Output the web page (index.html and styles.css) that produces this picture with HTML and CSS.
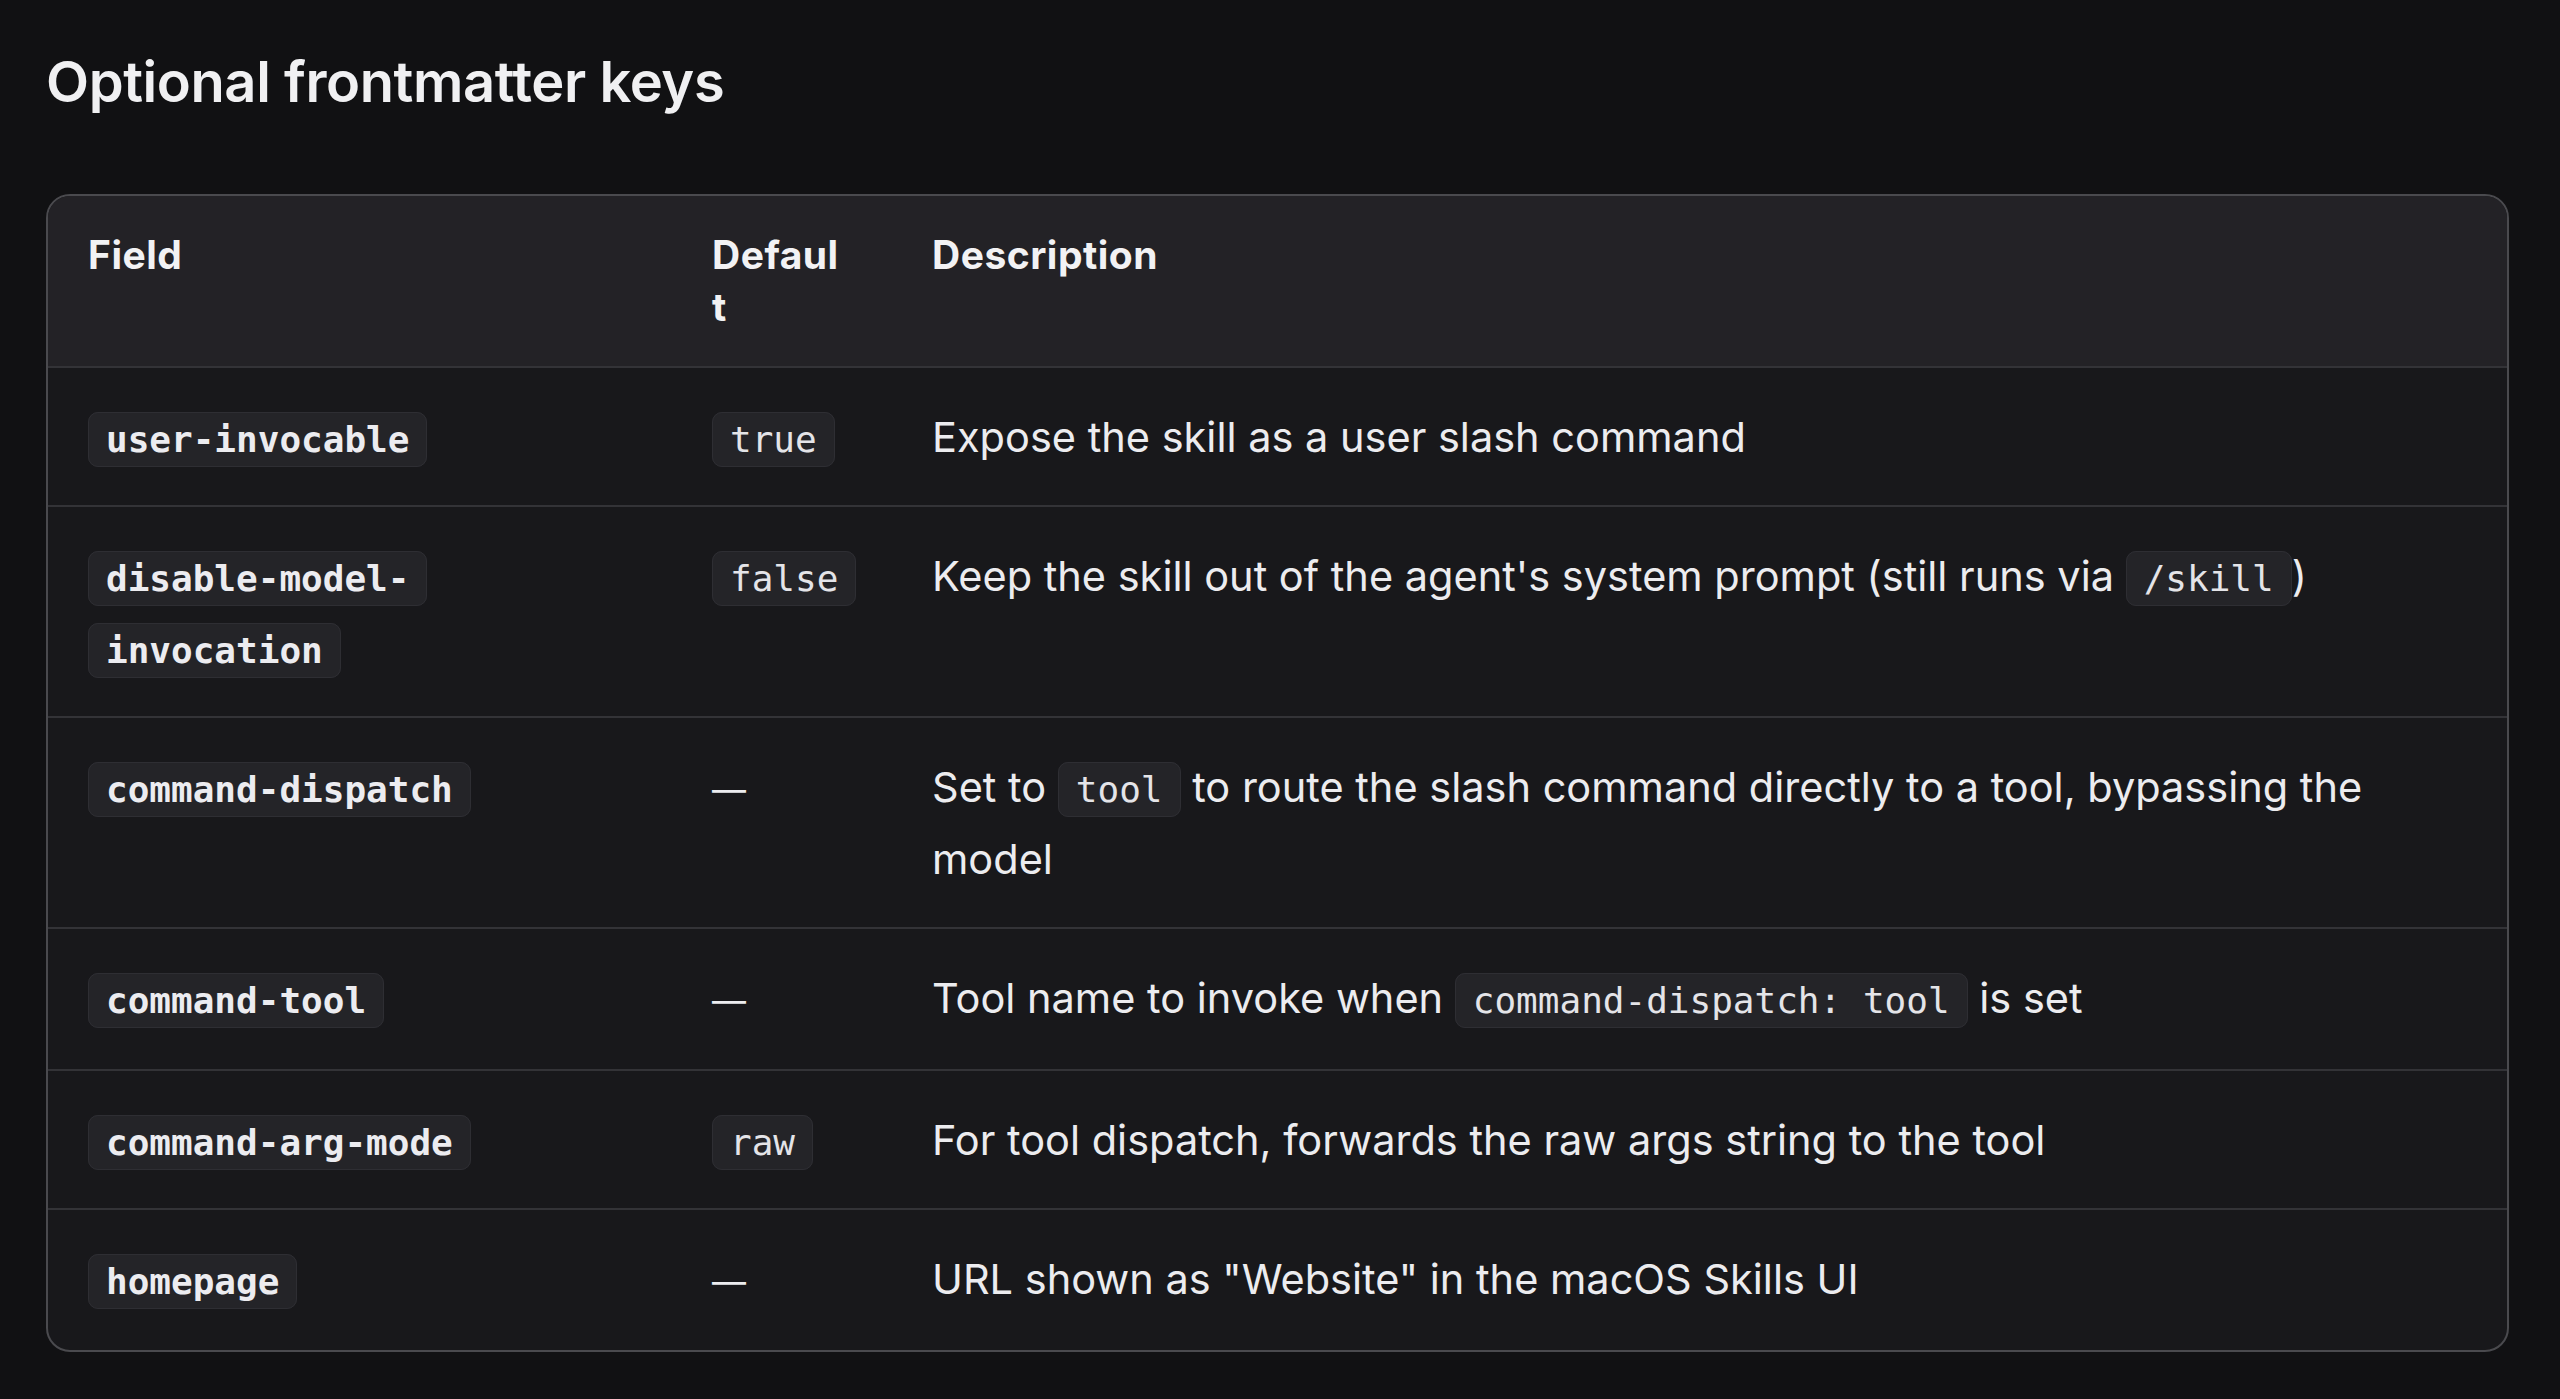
FILE: index.html
```html
<!DOCTYPE html>
<html lang="en">
<head>
<meta charset="utf-8">
<title>Optional frontmatter keys</title>
<link rel="stylesheet" href="styles.css">
</head>
<body>
<main class="page">
  <h2 class="title">Optional frontmatter keys</h2>
  <div class="table-wrap">
    <table class="keys">
      <colgroup>
        <col class="col-field">
        <col class="col-default">
        <col class="col-desc">
      </colgroup>
      <thead>
        <tr>
          <th>Field</th>
          <th>Defaul<br>t</th>
          <th>Description</th>
        </tr>
      </thead>
      <tbody>
        <tr>
          <td><code class="key">user-invocable</code></td>
          <td><code>true</code></td>
          <td>Expose the skill as a user slash command</td>
        </tr>
        <tr>
          <td><code class="key">disable-model-invocation</code></td>
          <td><code>false</code></td>
          <td>Keep the skill out of the agent's system prompt (still runs via <code>/skill</code>)</td>
        </tr>
        <tr>
          <td><code class="key">command-dispatch</code></td>
          <td><span class="dash">—</span></td>
          <td>Set to <code>tool</code> to route the slash command directly to a tool, bypassing the model</td>
        </tr>
        <tr>
          <td><code class="key">command-tool</code></td>
          <td><span class="dash">—</span></td>
          <td>Tool name to invoke when <code>command-dispatch: tool</code> is set</td>
        </tr>
        <tr>
          <td><code class="key">command-arg-mode</code></td>
          <td><code>raw</code></td>
          <td>For tool dispatch, forwards the raw args string to the tool</td>
        </tr>
        <tr>
          <td><code class="key">homepage</code></td>
          <td><span class="dash">—</span></td>
          <td>URL shown as "Website" in the macOS Skills UI</td>
        </tr>
      </tbody>
    </table>
  </div>
</main>
</body>
</html>
```

FILE: styles.css
```css
* {
  box-sizing: border-box;
}

html,
body {
  margin: 0;
  padding: 0;
  background: #111113;
}

body {
  font-family: Inter, "Noto Sans", "Liberation Sans", sans-serif;
  color: #ececef;
}

.page {
  padding: 49px 51px 0 46px;
}

.title {
  margin: 0 0 78px;
  font-size: 56px;
  line-height: 67px;
  font-weight: 600;
  letter-spacing: -0.4px;
  color: #f0f0f2;
}

.table-wrap {
  border: 2px solid #4a4a4e;
  border-radius: 24px;
  overflow: hidden;
  background: #18181b;
}

.keys {
  width: 100%;
  border-collapse: collapse;
  table-layout: fixed;
}

.col-field {
  width: 624px;
}

.col-default {
  width: 220px;
}

.keys th,
.keys td {
  text-align: left;
  vertical-align: top;
  padding: 33px 40px 32px 40px;
}

.keys th {
  background: #232226;
  font-size: 39px;
  line-height: 52px;
  font-weight: 700;
  letter-spacing: 0.5px;
  color: #f2f2f4;
  padding-bottom: 33px;
}

.keys td {
  font-size: 41.5px;
  line-height: 72px;
  font-weight: 400;
}

.keys tbody tr {
  border-top: 2px solid #333337;
}

.dash {
  display: inline-block;
  font-size: 34px;
}

code {
  font-family: "DejaVu Sans Mono", "Liberation Mono", monospace;
  font-size: 36px;
  line-height: 1;
  color: #e4e4e8;
  background: #242428;
  border: 1px solid #2e2e33;
  border-radius: 10px;
  padding: 6px 17px;
  -webkit-box-decoration-break: clone;
  box-decoration-break: clone;
}

code.key {
  font-weight: 700;
  color: #ececf0;
}
```
